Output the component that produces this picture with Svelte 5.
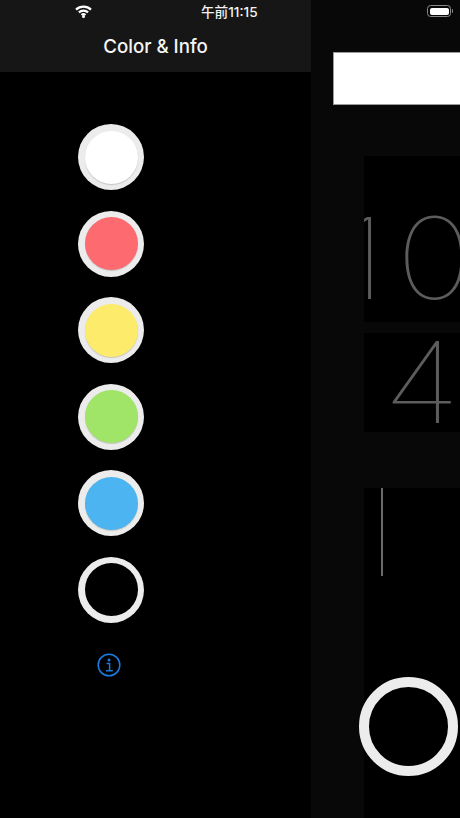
<script>
  const swatches = [
    { colour: '#ffffff', empty: false },
    { colour: '#fd6a70', empty: false },
    { colour: '#fdec6c', empty: false },
    { colour: '#a0e468', empty: false },
    { colour: '#4cb4f0', empty: false },
    { colour: '#000000', empty: true }
  ];
</script>

<div class="screen">
  <div class="status">
    <svg class="wifi" viewBox="0 0 17 13" aria-hidden="true">
      <path d="M1 4.6C5.2 .6 11.8 .6 16 4.6" />
      <path d="M3.9 7.4C6.5 5 10.5 5 13.1 7.4" />
      <path d="M6.5 10C7.7 9 9.3 9 10.5 10" />
      <circle cx="8.5" cy="11.4" r="1.5" />
    </svg>
    <span class="time">午前11:15</span>
    <span class="battery"><span class="level"></span></span>
  </div>

  <aside class="sidebar">
    <header class="nav">Color &amp; Info</header>
    <div class="list">
      {#each swatches as s}
        <button class="swatch" aria-label="colour {s.colour}"><span class="fill" class:empty={s.empty} style="background: {s.colour}"></span></button>
      {/each}
      <svg class="info" viewBox="0 0 24 24" aria-label="Info">
        <circle cx="12" cy="12" r="10.8" />
        <path d="M9.6 10.6H12.6V17.6M9 17.8H15.8" />
        <circle class="dot" cx="12" cy="7" r="1.5" />
      </svg>
    </div>
  </aside>

  <main class="panel">
    <div class="title-bar"></div>
    <section class="card hours"><span class="digits">10</span></section>
    <section class="card minutes"><span class="digits">4</span></section>
    <section class="card seconds">
      <div class="needle"></div>
      <div class="ring"></div>
    </section>
  </main>
</div>

<style>
  :global(body) {
    margin: 0;
    background: #000;
  }
  .screen {
    position: relative;
    display: flex;
    width: 460px;
    height: 818px;
    overflow: hidden;
    background: #000;
    font-family: Inter, "Noto Sans CJK JP", sans-serif;
    color: #fff;
  }
  .status {
    position: absolute;
    inset: 0 0 auto 0;
    height: 24px;
  }
  .wifi {
    position: absolute;
    left: 74.5px;
    top: 5px;
    width: 17px;
    height: 13px;
  }
  .wifi path {
    fill: none;
    stroke: #fff;
    stroke-width: 2.2;
  }
  .wifi circle {
    fill: #fff;
  }
  .time {
    position: absolute;
    left: 201px;
    top: 4px;
    font-size: 13.6px;
    line-height: 16px;
    font-weight: 500;
    color: #f2f2f2;
    white-space: nowrap;
  }
  .battery {
    position: absolute;
    left: 427px;
    top: 5px;
    box-sizing: border-box;
    width: 24px;
    height: 12px;
    padding: 1.5px;
    border: 1px solid #8a8a8a;
    border-radius: 3.5px;
  }
  .battery::after {
    content: "";
    position: absolute;
    left: 23.5px;
    top: 2.5px;
    width: 1.5px;
    height: 4px;
    border-radius: 0 1px 1px 0;
    background: #8a8a8a;
  }
  .level {
    display: block;
    height: 100%;
    border-radius: 2px;
    background: #fff;
  }
  .sidebar {
    flex: none;
    width: 311px;
  }
  .nav {
    box-sizing: border-box;
    height: 72px;
    padding-top: 35px;
    background: #161616;
    font-size: 18.7px;
    line-height: 24px;
    font-weight: 500;
    text-align: center;
    color: #f5f5f5;
  }
  .list {
    display: flex;
    flex-direction: column;
    align-items: flex-start;
    gap: 20.6px;
    padding: 52px 0 0 78px;
  }
  .swatch {
    display: flex;
    align-items: center;
    justify-content: center;
    box-sizing: border-box;
    width: 66px;
    height: 66px;
    padding: 0;
    border: 0;
    border-radius: 50%;
    background: #ececec;
  }
  .fill {
    display: block;
    width: 53px;
    height: 53px;
    border-radius: 50%;
    box-shadow: 0 1px 1px #c4c4c4;
  }
  .fill.empty {
    box-shadow: none;
  }
  .info {
    width: 24px;
    height: 24px;
    margin: 9.5px 0 0 19px;
  }
  .info circle,
  .info path {
    fill: none;
    stroke: #1a7ce0;
    stroke-width: 1.5;
  }
  .info .dot {
    fill: #1a7ce0;
    stroke: none;
  }
  .panel {
    flex: 1;
    min-width: 0;
    padding-top: 52px;
    background: #080808;
  }
  .title-bar {
    box-sizing: border-box;
    height: 53px;
    margin-left: 21.5px;
    border: 1px solid #9a9a9a;
    border-right: 0;
    background: #fff;
  }
  .card {
    margin-left: 53px;
    background: #000;
  }
  .hours {
    height: 166px;
    margin-top: 51px;
    overflow: hidden;
  }
  .minutes {
    height: 99px;
    margin-top: 11px;
    overflow: hidden;
  }
  .seconds {
    height: 330px;
    margin-top: 56px;
  }
  .digits {
    display: block;
    font-family: Inter, sans-serif;
    font-weight: 100;
    font-size: 113px;
    line-height: 1;
    color: #5c5c5c;
    white-space: nowrap;
    transform: scaleX(1.15);
    transform-origin: left center;
  }
  .hours .digits {
    margin-left: -26px;
    padding-top: 46px;
    letter-spacing: 8.9px;
  }
  .minutes .digits {
    margin-left: 19px;
    line-height: 98px;
  }
  .needle {
    width: 2px;
    height: 88px;
    margin-left: 17px;
    background: #6a6a6a;
  }
  .ring {
    box-sizing: border-box;
    width: 99px;
    height: 99px;
    margin: 101px 0 0 -5px;
    border: 10px solid #ececec;
    border-radius: 50%;
  }
</style>
